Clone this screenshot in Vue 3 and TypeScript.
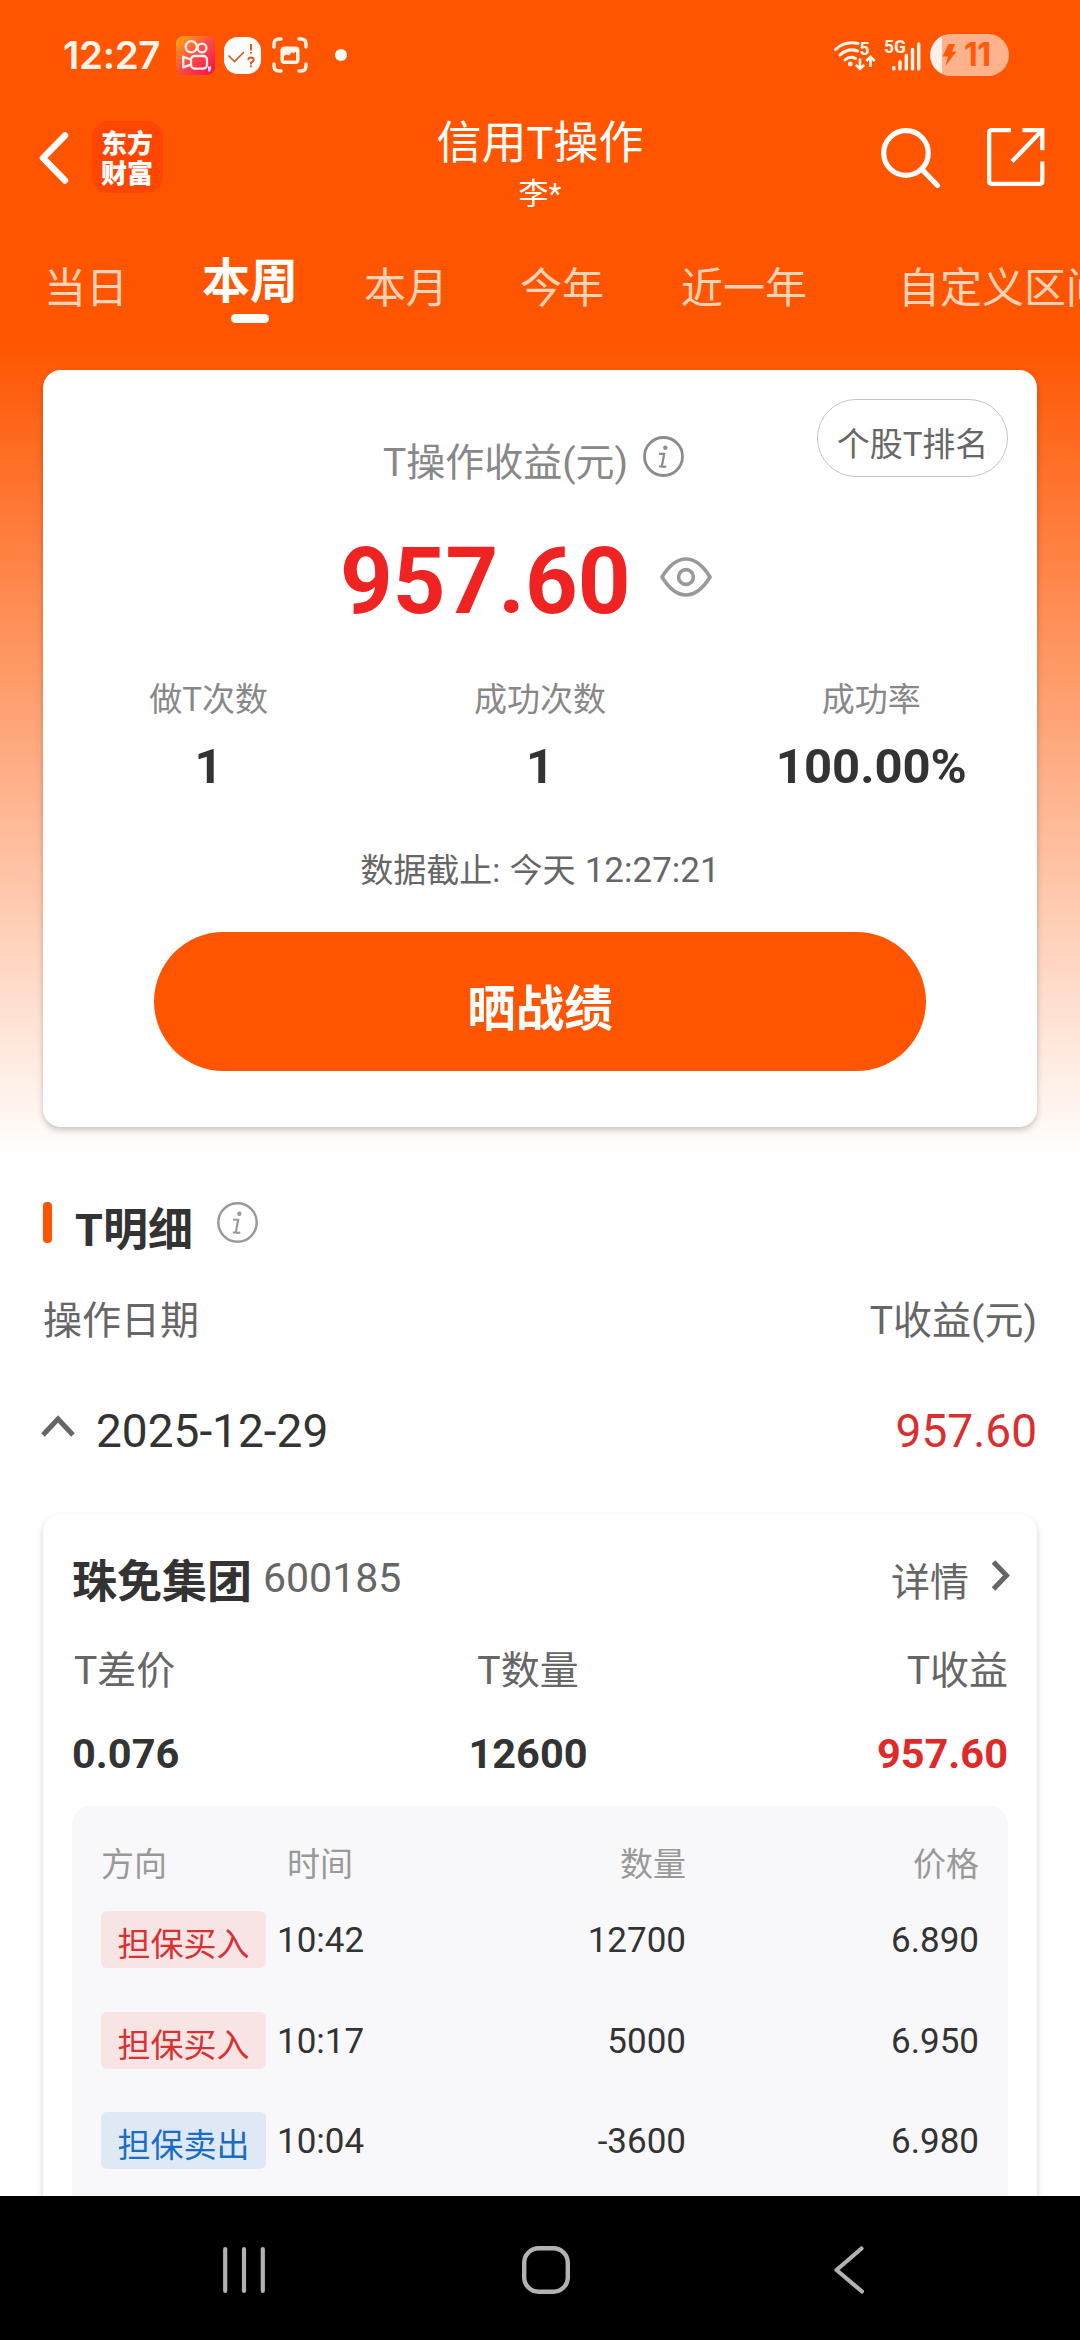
<script setup lang="ts">
interface Trade {
  side: 'buy' | 'sell'
  label: string
  time: string
  qty: string
  price: string
}

const tabs: { text: string; active?: boolean }[] = [
  { text: '当日' },
  { text: '本周', active: true },
  { text: '本月' },
  { text: '今年' },
  { text: '近一年' },
  { text: '自定义区间' },
]

const stats = [
  { label: '做T次数', value: '1' },
  { label: '成功次数', value: '1' },
  { label: '成功率', value: '100.00%' },
]

const trades: Trade[] = [
  { side: 'buy', label: '担保买入', time: '10:42', qty: '12700', price: '6.890' },
  { side: 'buy', label: '担保买入', time: '10:17', qty: '5000', price: '6.950' },
  { side: 'sell', label: '担保卖出', time: '10:04', qty: '-3600', price: '6.980' },
]
</script>

<template>
  <div class="phone">
    <main class="screen">
      <div class="status">
        <span class="clock">12:27</span>
        <svg class="s-app" viewBox="0 0 39 39">
          <defs>
            <linearGradient id="ks" x1="0" y1="0" x2="1" y2="1">
              <stop offset="0" stop-color="#ffae12" />
              <stop offset=".45" stop-color="#fb5340" />
              <stop offset="1" stop-color="#f80a55" />
            </linearGradient>
          </defs>
          <rect width="39" height="39" rx="8" fill="url(#ks)" />
          <g fill="none" stroke="#ffeef0" stroke-width="2.3" stroke-linejoin="round">
            <circle cx="15.3" cy="10.8" r="5.6" />
            <circle cx="26" cy="12" r="4.4" />
            <rect x="15" y="20" width="16" height="12.6" rx="3.6" />
            <path d="M15 23.6 7.2 20.8v10.6l7.8-2.8" />
          </g>
          <path d="M32 30.5h3.4l-1.2 5h-2z" fill="#ffeef0" />
        </svg>
        <svg class="s-check" viewBox="0 0 37 37">
          <rect width="37" height="37" rx="14" fill="#fff" />
          <g fill="none" stroke="#d65a1c" stroke-width="1.6">
            <path d="m4.5 18.500 6 6 9.500-9.500" />
            <path d="M27 7v6.500M27 15v1.600M24.300 22.800q.3-2.400 2.700-2.400t2.700 2.200q0 1.500-2.700 3v1.800M27 28.600v1.600" stroke-width="2" />
          </g>
        </svg>
        <svg class="s-scan" viewBox="0 0 36 36">
          <path d="M2 10V7q0-5 5-5h2M27 2h2q5 0 5 5v3M34 27v2q0 5-5 5h-2M9 34H7q-5 0-5-5v-2" fill="none" stroke="#fff4ea" stroke-width="3.400" stroke-linecap="round" />
          <rect x="8.500" y="9.500" width="19" height="17.500" rx="4" fill="#fff4ea" />
          <path d="M12 23.500v-4.500l2.500-1.500 2.500 1 3-3.500 1.500 1.500 2.500-2v9z" fill="#ff5500" />
        </svg>
        <span class="s-dot"></span>
        <svg class="s-wifi" viewBox="0 0 44 34">
          <g fill="none" stroke="#fff4ea" stroke-width="3" stroke-linecap="round">
            <path d="M2.500 11.500Q12 2.500 25 5.500" />
            <path d="M7 17q8-7.500 17.500-4" />
            <path d="M12 22q5-4.500 10.500-1.500" />
          </g>
          <circle cx="17.300" cy="26" r="2.400" fill="#fff4ea" />
          <text x="26.500" y="16.500">5</text>
          <g fill="none" stroke="#fff4ea" stroke-width="2.600">
            <path d="M27 20.500v9.500M22.800 26.800l4.200 4.200 4.200-4.200M37.500 29v-9.500M33.300 23l4.200-4.200 4.200 4.200" />
          </g>
        </svg>
        <svg class="s-cell" viewBox="0 0 40 34">
          <text x="1" y="15">5G</text>
          <g stroke="#fff4ea" stroke-width="3.400" stroke-linecap="round">
            <path d="M10.800 29.500v1.500M17 24v7M23.300 17.500V31M29.500 11.500V31M35.700 6V31" />
          </g>
        </svg>
        <div class="battery">
          <svg viewBox="0 0 14 22"><path d="M6 0h6.500L9.500 7.500H14L3 22l2.500-9.500H0z" fill="#ff5a08" /></svg>
          <span>11</span>
        </div>
      </div>

      <header class="bar">
        <svg class="back" viewBox="0 0 30 54">
          <path d="M26 4.500 4 27l22 22.500" fill="none" stroke="#fff" stroke-width="6.500" stroke-linecap="round" stroke-linejoin="round" />
        </svg>
        <div class="logo">东方财富</div>
        <div class="title">
          <h1>信用T操作</h1>
          <p>李*</p>
        </div>
        <svg class="search" viewBox="0 0 60 60">
          <g fill="none" stroke="#fff" stroke-width="5.200" stroke-linecap="round">
            <circle cx="25" cy="25" r="22.300" />
            <path d="m41.500 42 15 15.500" />
          </g>
        </svg>
        <svg class="share" viewBox="0 0 58 58">
          <g fill="none" stroke="#fff" stroke-width="4.200">
            <path d="M24 2.200H4.500Q2.200 2.200 2.200 4.500v49q0 2.300 2.300 2.300H53q2.300 0 2.300-2.300V33.500" />
            <path d="M35.500 2.200h19.800v20M54.500 3 25 33.500" />
          </g>
        </svg>
      </header>

      <nav class="tabs">
        <span v-for="t in tabs" :key="t.text" class="tab" :class="{ active: t.active }">{{ t.text }}</span>
      </nav>

      <section class="card summary">
        <span class="rank">个股T排名</span>
        <div class="cap">
          <span>T操作收益(元)</span>
          <svg class="info" viewBox="0 0 41 41">
            <circle cx="20.500" cy="20.500" r="19" fill="none" stroke="#8c8c8c" stroke-width="2.800" />
            <circle cx="22.300" cy="11.800" r="2.200" fill="#8c8c8c" />
            <path d="M16 17.800h5.200L19 29.500q-.2 1.400 1.300 1.400l3-.4M15.800 30.500h4" fill="none" stroke="#8c8c8c" stroke-width="2.200" />
          </svg>
        </div>
        <div class="amount">
          <strong>957.60</strong>
          <svg viewBox="0 0 52 40">
            <g fill="none" stroke="#999" stroke-width="3.600" stroke-linejoin="round">
              <path d="M2 20Q13 2 26 2t24 18Q39 38 26 38T2 20z" />
              <circle cx="26" cy="20" r="7.400" />
            </g>
          </svg>
        </div>
        <div class="stats">
          <div v-for="s in stats" :key="s.label">
            <span>{{ s.label }}</span>
            <b>{{ s.value }}</b>
          </div>
        </div>
        <p class="asof">数据截止: 今天 <span>12:27:21</span></p>
        <div class="show">晒战绩</div>
      </section>

      <div class="section-title">
        <i></i>
        <h2>T明细</h2>
        <svg class="info" viewBox="0 0 41 41">
          <circle cx="20.500" cy="20.500" r="19.200" fill="none" stroke="#999" stroke-width="2.400" />
          <circle cx="22.300" cy="11.800" r="2.200" fill="#999" />
          <path d="M16 17.800h5.200L19 29.500q-.2 1.400 1.300 1.400l3-.4M15.800 30.500h4" fill="none" stroke="#999" stroke-width="2.100" />
        </svg>
      </div>
      <div class="cols"><span>操作日期</span><span>T收益(元)</span></div>
      <div class="day">
        <svg viewBox="0 0 34 22"><path d="M2 20 17 4l15 16" fill="none" stroke="#666" stroke-width="5" /></svg>
        <span>2025-12-29</span>
        <em>957.60</em>
      </div>

      <section class="card stock">
        <div class="stock-head">
          <h3>珠免集团</h3>
          <span class="code">600185</span>
          <span class="more">详情</span>
          <svg viewBox="0 0 19 31"><path d="M2.500 2 15.500 15.500 2.500 29" fill="none" stroke="#666" stroke-width="5" /></svg>
        </div>
        <div class="triple labels"><span>T差价</span><span>T数量</span><span>T收益</span></div>
        <div class="triple values"><span>0.076</span><span>12600</span><span class="red">957.60</span></div>
        <div class="trades">
          <div class="row head"><span>方向</span><span class="t">时间</span><span>数量</span><span>价格</span></div>
          <div v-for="r in trades" :key="r.time" class="row">
            <span class="tag" :class="r.side">{{ r.label }}</span>
            <span class="t">{{ r.time }}</span>
            <span>{{ r.qty }}</span>
            <span>{{ r.price }}</span>
          </div>
        </div>
      </section>
    </main>

    <footer class="sysnav">
      <svg class="recents" viewBox="0 0 42 48"><path d="M2.200 3v42M21 3v42M39.800 3v42" stroke="#b2b2b2" stroke-width="4.200" stroke-linecap="round" /></svg>
      <svg class="home" viewBox="0 0 48 48"><rect x="2.200" y="2.200" width="43.600" height="43.600" rx="14.500" fill="none" stroke="#b2b2b2" stroke-width="4.400" /></svg>
      <svg class="prev" viewBox="0 0 30 48"><path d="M27.500 2.500 2.500 24l25.500 21.500" fill="none" stroke="#b2b2b2" stroke-width="4.200" stroke-linecap="round" stroke-linejoin="round" /></svg>
    </footer>
  </div>
</template>

<style>
body {
  margin: 0;
  background: #fff;
}
</style>

<style scoped>
* {
  box-sizing: border-box;
  margin: 0;
  padding: 0;
}
svg {
  display: block;
  flex: none;
}
.phone {
  width: 1080px;
  height: 2340px;
  display: flex;
  flex-direction: column;
  overflow: hidden;
  font-family: Roboto, "Noto Sans CJK SC", sans-serif;
  color: #333;
  white-space: nowrap;
}
.screen {
  flex: 1;
  min-height: 0;
  overflow: hidden;
  background: linear-gradient(#ff5500 0, #ff5500 340px, #fff 1158px);
}

/* status bar */
.status {
  height: 110px;
  display: flex;
  align-items: center;
  padding: 0 71px 0 63px;
}
.clock {
  width: 113px;
  font: 600 38.500px/50px Inter, sans-serif;
  letter-spacing: -0.300px;
  color: #fff4ea;
}
.s-app { width: 39px; height: 39px; }
.s-check { width: 37px; height: 37px; margin-left: 9px; }
.s-scan { width: 36px; height: 36px; margin-left: 11px; }
.s-dot {
  width: 12px;
  height: 12px;
  margin-left: 27px;
  border-radius: 50%;
  background: #fff;
}
.s-wifi { width: 44px; height: 34px; margin-left: auto; }
.s-cell { width: 40px; height: 34px; margin: 0 7px 0 6px; }
.status text {
  font: 700 17.500px Roboto, sans-serif;
  fill: #fff4ea;
}
.battery {
  width: 79px;
  height: 42px;
  border-radius: 21px;
  display: flex;
  align-items: center;
  padding-left: 12px;
  background: linear-gradient(90deg, #fff1ea 12px, #ffb28c 12px);
}
.battery svg { width: 15px; height: 22px; }
.battery span {
  margin-left: 7px;
  font: 700 32px/42px Inter, sans-serif;
  letter-spacing: -0.500px;
  color: #ff5a08;
}

/* title bar */
.bar {
  height: 110px;
  display: flex;
  align-items: flex-start;
  color: #fff;
}
.back { width: 30px; height: 54px; margin: 21px 0 0 39px; }
.logo {
  width: 71px;
  height: 72px;
  margin: 11px 0 0 23px;
  padding: 6px 9px 0;
  border-radius: 16px;
  background: #ff4600;
  font: 900 26px/30px "Noto Sans CJK SC", sans-serif;
  white-space: normal;
}
.title {
  width: 718px;
  flex: none;
  padding: 4px 0 0 36px;
  text-align: center;
}
.title h1 { font-size: 45px; line-height: 60px; font-weight: 400; }
.title p { font-size: 30px; line-height: 40px; }
.search { width: 60px; height: 60px; margin-top: 18px; }
.share { width: 58px; height: 58px; margin: 18px 0 0 46px; }

/* period tabs */
.tabs {
  height: 150px;
  padding-left: 44px;
  display: flex;
  align-items: flex-start;
  overflow: hidden;
}
.tab {
  flex: none;
  padding-top: 39px;
  font-size: 42px;
  line-height: 60px;
  color: #ffd3b8;
}
.tab:nth-child(3) { margin-left: 66px; }
.tab:nth-child(4) { margin-left: 72px; }
.tab:nth-child(5) { margin-left: 77px; }
.tab:nth-child(6) { margin-left: 91px; }
.tab.active {
  padding-top: 32px;
  margin-left: 74px;
  font-size: 48px;
  font-weight: 700;
  color: #fff;
  display: flex;
  flex-direction: column;
  align-items: center;
}
.tab.active::after {
  content: "";
  width: 38px;
  height: 9px;
  margin-top: 2px;
  border-radius: 5px;
  background: #fff;
}

/* cards */
.card {
  margin: 0 43px;
  border-radius: 18px;
  background: #fff;
}
.summary {
  position: relative;
  height: 757px;
  padding-top: 68px;
  box-shadow: 0 3px 6px rgba(0, 0, 0, 0.22);
}
.rank {
  position: absolute;
  top: 29px;
  right: 29px;
  width: 191px;
  height: 78px;
  padding-top: 10px;
  border: 1.500px solid #c4c4c4;
  border-radius: 40px;
  font-size: 33px;
  line-height: 70px;
  text-align: center;
  color: #666;
}
.cap {
  display: flex;
  height: 50px;
  padding-left: 340px;
  font-size: 39px;
  line-height: 50px;
  color: #888;
}
.cap span { width: 260px; }
.info { width: 41px; height: 41px; }
.cap .info { margin-top: -2px; }
.amount {
  display: flex;
  height: 100px;
  margin-top: 44px;
  padding-left: 297px;
}
.amount strong {
  width: 320px;
  font-size: 92px;
  line-height: 100px;
  font-weight: 700;
  color: #f02323;
}
.amount svg { width: 52px; height: 40px; margin-top: 25px; }
.stats {
  display: grid;
  grid-template-columns: repeat(3, 1fr);
  margin-top: 46px;
  text-align: center;
}
.stats span {
  display: block;
  font-size: 33px;
  line-height: 44px;
  color: #888;
}
.stats b {
  display: block;
  margin-top: 15px;
  font-size: 49px;
  line-height: 60px;
}
.asof {
  margin-top: 52px;
  font-size: 33px;
  line-height: 44px;
  word-spacing: 1px;
  text-align: center;
  color: #666;
}
.asof span { font-size: 35px; }
.show {
  width: 772px;
  height: 139px;
  margin: 39px auto 0;
  padding-top: 18px;
  border-radius: 70px;
  background: #ff5500;
  font-size: 48.500px;
  line-height: 120px;
  font-weight: 700;
  text-align: center;
  color: #fff;
}

/* detail section */
.section-title {
  display: flex;
  margin: 74px 43px 0;
}
.section-title i {
  width: 9px;
  height: 41px;
  margin-top: 1px;
  border-radius: 4px;
  background: #ff5500;
}
.section-title h2 {
  width: 165px;
  padding-left: 23px;
  font-size: 45px;
  line-height: 60px;
  font-weight: 700;
}
.section-title .info { margin-top: 1px; }
.cols {
  display: flex;
  justify-content: space-between;
  margin: 35px 43px 0;
  font-size: 39px;
  line-height: 50px;
  color: #666;
}
.day {
  display: flex;
  margin: 55px 43px 53px 41px;
  font-size: 46px;
  line-height: 60px;
}
.day svg { width: 34px; height: 22px; margin: 14px 21px 0 0; }
.day em { margin-left: auto; font-style: normal; color: #dc2e2e; }

.stock {
  height: 900px;
  padding: 39px 29px 0;
  box-shadow: 0 3px 6px rgba(0, 0, 0, 0.18);
}
.stock-head {
  display: flex;
  align-items: flex-start;
  line-height: 60px;
}
.stock-head h3 { font-size: 45px; font-weight: 700; }
.code { margin-left: 11px; font-size: 41px; line-height: 50px; color: #666; }
.more { margin-left: auto; font-size: 39px; color: #666; }
.stock-head svg { width: 19px; height: 31px; margin: 7px -2px 0 22px; }
.triple {
  display: grid;
  grid-template-columns: 302px 308px 326px;
  margin-top: 33px;
  line-height: 50px;
}
.triple span:nth-child(2) { text-align: center; }
.triple span:nth-child(3) { text-align: right; }
.labels { font-size: 39px; color: #666; }
.labels span:first-child { padding-left: 2px; }
.values { font-size: 41.500px; font-weight: 700; }
.values .red { color: #e02a2a; }
.trades {
  height: 600px;
  margin-top: 27px;
  padding: 37px 29px 0;
  border-radius: 18px;
  background: #f8f8fa;
}
.row {
  display: grid;
  grid-template-columns: 165px 190px 230px 293px;
  height: 57px;
  margin-bottom: 43.500px;
  font-size: 35px;
  line-height: 60px;
  text-align: right;
}
.row .t { text-align: left; padding-left: 11px; }
.row.head {
  height: 44px;
  margin-bottom: 24px;
  font-size: 33px;
  line-height: 44px;
  color: #999;
}
.row.head span:first-child { text-align: left; }
.row.head .t { padding-left: 21px; }
.tag {
  height: 57px;
  padding-top: 10px;
  border-radius: 6px;
  font-size: 33px;
  line-height: 47px;
  text-align: center;
}
.tag.buy { background: #f8e4e5; color: #d93030; }
.tag.sell { background: #dfe9f5; color: #1a6cc4; }

/* system navigation */
.sysnav {
  height: 144px;
  flex: none;
  display: flex;
  align-items: center;
  padding: 4px 0 0 223px;
  background: #000;
}
.recents { width: 42px; height: 48px; }
.home { width: 48px; height: 48px; margin-left: 257px; }
.prev { width: 30px; height: 48px; margin-left: 264px; }
</style>
